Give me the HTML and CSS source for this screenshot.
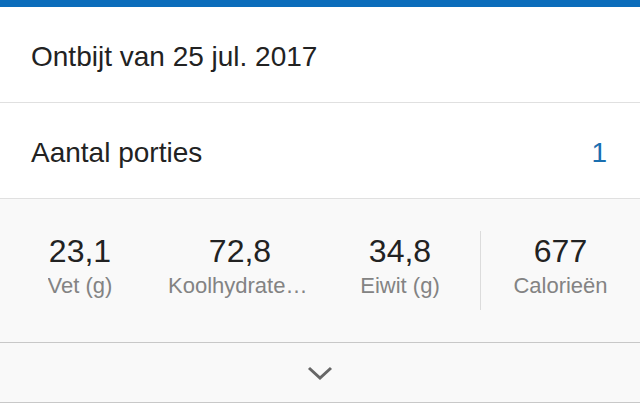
FILE: index.html
```html
<!DOCTYPE html>
<html lang="nl">
<head>
  <meta charset="UTF-8">
  <meta name="viewport" content="width=device-width, initial-scale=1.0">
  <title>Ontbijt</title>
  <link rel="stylesheet" href="styles.css">
</head>
<body>
  <div class="topbar"></div>

  <div class="rij">
    <span>Ontbijt van 25 jul. 2017</span>
  </div>

  <div class="rij">
    <span>Aantal porties</span>
    <span class="waarde">1</span>
  </div>

  <div class="overzicht">
    <div class="stat">
      <div class="stat-getal">23,1</div>
      <div class="stat-label">Vet (g)</div>
    </div>
    <div class="stat">
      <div class="stat-getal">72,8</div>
      <div class="stat-label">Koolhydraten (g)</div>
    </div>
    <div class="stat">
      <div class="stat-getal">34,8</div>
      <div class="stat-label">Eiwit (g)</div>
    </div>
    <div class="stat calorieen">
      <div class="stat-getal">677</div>
      <div class="stat-label">Calorieën</div>
    </div>
  </div>

  <div class="uitklap">
    <svg width="26" height="14" viewBox="0 0 26 14">
      <polyline points="2,2 13,12 24,2" fill="none" stroke="#666" stroke-width="3"/>
    </svg>
  </div>
</body>
</html>
```

FILE: styles.css
```css
body {
  margin: 0;
  font-family: 'Liberation Sans', Arial, sans-serif;
  background-color: #ffffff;
  color: #222222;
}

.topbar {
  height: 7px;
  background-color: #0b6dbb;
}

.rij {
  height: 96px;
  box-sizing: border-box;
  padding: 4px 33px 0 31px;
  display: flex;
  align-items: center;
  justify-content: space-between;
  font-size: 28px;
  border-bottom: 1px solid #e0e0e0;
}

.waarde {
  color: #1a6fb0;
}

.overzicht {
  background-color: #f9f9f9;
  padding: 32px 0;
  display: grid;
  grid-template-columns: repeat(4, 1fr);
  border-bottom: 1px solid #c8c8c8;
}

.stat {
  padding: 4px 8px 11px;
  display: flex;
  flex-direction: column;
  align-items: center;
  min-width: 0;
}

.calorieen {
  border-left: 1px solid #dcdcdc;
}

.stat-getal {
  font-size: 32px;
  line-height: 32px;
  margin-bottom: 6px;
  color: #222222;
}

.stat-label {
  font-size: 22px;
  line-height: 26px;
  color: #838383;
  max-width: 100%;
  white-space: nowrap;
  overflow: hidden;
  text-overflow: ellipsis;
}

.uitklap {
  height: 59px;
  background-color: #f9f9f9;
  display: flex;
  align-items: center;
  justify-content: center;
  border-bottom: 1px solid #c8c8c8;
}
```
